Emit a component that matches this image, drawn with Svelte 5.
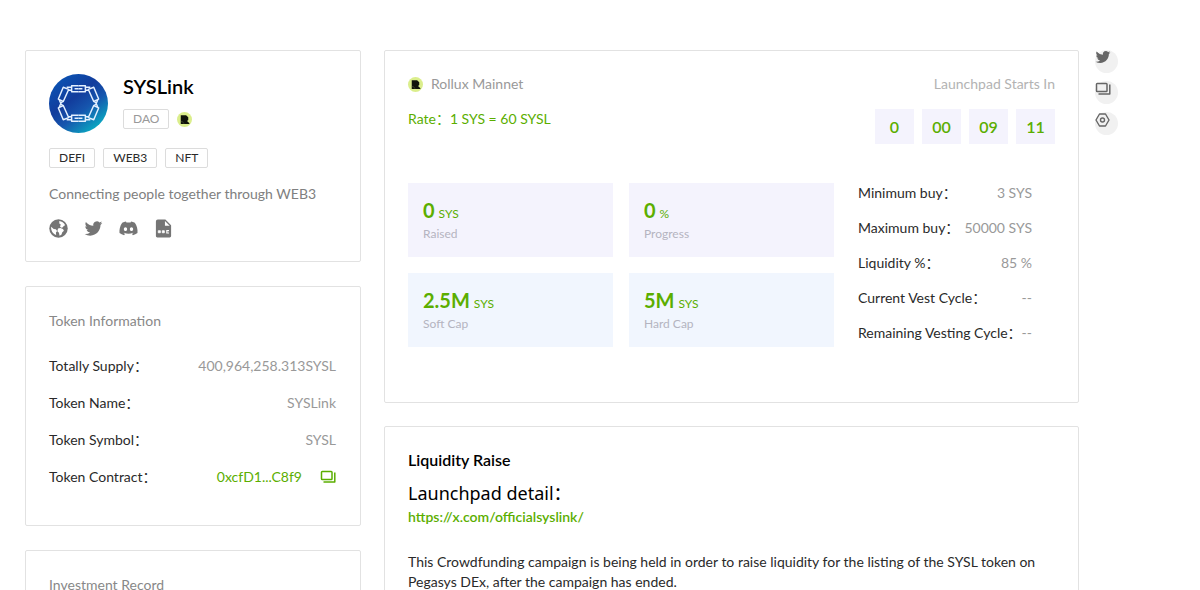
<script lang="ts">
  const tags = ['DEFI', 'WEB3', 'NFT'];

  const token = [
    { label: 'Totally Supply', value: '400,964,258.313SYSL' },
    { label: 'Token Name', value: 'SYSLink' },
    { label: 'Token Symbol', value: 'SYSL' },
  ];

  const countdown = ['0', '00', '09', '11'];

  const stats = [
    { value: '0', unit: 'SYS', label: 'Raised', tone: 'violet' },
    { value: '0', unit: '%', label: 'Progress', tone: 'violet' },
    { value: '2.5M', unit: 'SYS', label: 'Soft Cap', tone: 'blue' },
    { value: '5M', unit: 'SYS', label: 'Hard Cap', tone: 'blue' },
  ];

  const terms = [
    { label: 'Minimum buy', value: '3 SYS' },
    { label: 'Maximum buy', value: '50000 SYS' },
    { label: 'Liquidity %', value: '85 %' },
    { label: 'Current Vest Cycle', value: '--' },
    { label: 'Remaining Vesting Cycle', value: '--' },
  ];

  const twitter = 'M22.162 5.656a8.384 8.384 0 0 1-2.402.658A4.196 4.196 0 0 0 21.6 4c-.82.488-1.719.83-2.656 1.015a4.182 4.182 0 0 0-7.126 3.814 11.874 11.874 0 0 1-8.62-4.37 4.168 4.168 0 0 0-.566 2.103c0 1.45.738 2.731 1.86 3.481a4.168 4.168 0 0 1-1.894-.523v.052a4.185 4.185 0 0 0 3.355 4.101 4.21 4.21 0 0 1-1.89.072A4.185 4.185 0 0 0 7.97 16.65a8.394 8.394 0 0 1-6.191 1.732 11.83 11.83 0 0 0 6.41 1.88c7.693 0 11.9-6.373 11.9-11.9 0-.18-.005-.362-.013-.54a8.496 8.496 0 0 0 2.087-2.165z';
  const discord = 'M19.303 5.337A17.32 17.32 0 0 0 14.963 4c-.191.329-.403.775-.552 1.125a16.592 16.592 0 0 0-4.808 0C9.454 4.775 9.23 4.329 9.05 4a17.075 17.075 0 0 0-4.342 1.337C1.961 9.391 1.218 13.35 1.59 17.255a17.69 17.69 0 0 0 5.318 2.664 12.94 12.94 0 0 0 1.136-1.836c-.627-.234-1.22-.52-1.794-.86.149-.106.297-.223.435-.34 3.46 1.582 7.207 1.582 10.624 0 .149.117.287.234.435.34-.573.34-1.167.626-1.793.86a12.94 12.94 0 0 0 1.135 1.836 17.594 17.594 0 0 0 5.318-2.664c.457-4.52-.722-8.448-3.1-11.918ZM8.52 14.846c-1.04 0-1.889-.945-1.889-2.101 0-1.157.828-2.102 1.89-2.102 1.05 0 1.91.945 1.888 2.102 0 1.156-.838 2.1-1.889 2.1Zm6.974 0c-1.04 0-1.89-.945-1.89-2.101 0-1.157.828-2.102 1.89-2.102 1.05 0 1.91.945 1.889 2.102 0 1.156-.828 2.1-1.89 2.1Z';
</script>

{#snippet chainBadge()}
  <svg class="badge" viewBox="0 0 16 16" aria-hidden="true">
    <circle cx="8" cy="8" r="8" fill="#dbee8c"/>
    <path d="M4 3.500h5.700l2.300 2v3L10.700 9.700l2.500 2.300v.7H4z" fill="#10140a"/>
    <path d="M4 10.300h1.800l1.700 2.200" fill="none" stroke="#6c7448" stroke-width=".5"/>
  </svg>
{/snippet}

{#snippet copyIcon()}
  <svg viewBox="0 0 16 16" width="16" height="16" fill="none" stroke="currentColor" stroke-width="1.500" stroke-linejoin="round" aria-hidden="true">
    <rect x="1.500" y="2.500" width="10.500" height="8" rx=".8"/>
    <path d="M14.800 3.500v9.500H3.500"/>
  </svg>
{/snippet}

<div class="page">
  <main>
    <div class="side">
      <section class="card profile">
        <header>
          <svg class="logo" viewBox="0 0 60 60" aria-hidden="true">
            <defs>
              <linearGradient id="logo-fill" x1=".2" y1=".1" x2=".85" y2=".95">
                <stop offset="0" stop-color="#0b50b0"/>
                <stop offset=".35" stop-color="#123c9c"/>
                <stop offset=".6" stop-color="#1656ae"/>
                <stop offset="1" stop-color="#08b4c4"/>
              </linearGradient>
            </defs>
            <circle cx="30" cy="30" r="30" fill="url(#logo-fill)"/>
            <g fill="none" stroke="#e4f0ff" stroke-width="1.500" stroke-linejoin="round">
              {#each ['', 'matrix(-1 0 0 1 60 0)', 'matrix(1 0 0 -1 0 60)', 'rotate(180 30 30)'] as flip}
                <g transform={flip}>
                  <path d="M30 12h-7v6h7M26 15h4"/>
                  <path d="M14.500 13.500l5.500 2.200-5.500 12.300-5-2.500z"/>
                  <path d="M23 13.500h-5M23 16.500h-3.500M10.500 26.500l1.500 3.500M14 28l-2.500 2"/>
                </g>
              {/each}
            </g>
          </svg>
          <div class="identity">
            <h1>SYSLink</h1>
            <div class="kind">
              <span class="tag muted">DAO</span>
              {@render chainBadge()}
            </div>
          </div>
        </header>
        <div class="tags">
          {#each tags as tag}
            <span class="tag">{tag}</span>
          {/each}
        </div>
        <p>Connecting people together through WEB3</p>
        <nav class="socials">
          <a href="#website" aria-label="Website">
            <svg viewBox="0 0 20 20">
              <circle cx="10" cy="10" r="9.700" fill="currentColor"/>
              <path d="M10.800 2.200c2.600.3 5 1.900 6.200 4.400l-1.600.7-.7 1.500-2 .3-1.200-1.600 1-1.500-1.600-1.300z" fill="#fff"/>
              <path d="M2.300 8.200l2.600 2.200 2.300.5 1.300 1.600-1.200 1.700.2 2.700c-3.200-1.100-5.700-4.600-5.200-8.700z" fill="#fff"/>
              <path d="M9.500 10l2.500-.6 2.700 1.200 1 1.700-1.700 1.600-1 2.600-1.900 1.100-.6-3-1.700-1.800z" fill="#fff"/>
            </svg>
          </a>
          <a href="#twitter" aria-label="Twitter">
            <svg viewBox="1 1 22 22"><path d={twitter} fill="currentColor"/></svg>
          </a>
          <a href="#discord" aria-label="Discord">
            <svg viewBox="1 1 22 22"><path d={discord} fill="currentColor"/></svg>
          </a>
          <a href="#docs" aria-label="Documents">
            <svg viewBox="0 0 20 20">
              <path d="M4 .5h8L18 6.500v11.500a1.500 1.500 0 0 1-1.500 1.500h-13A1.500 1.500 0 0 1 2 18V2.500a2 2 0 0 1 2-2z" fill="currentColor"/>
              <path d="M11.500 2v5h5z" fill="#fff"/>
              <path d="M4.500 12.300h2.200v2.200H4.500zM8.700 12.300h2.200v2.200H8.700z" fill="#fff" stroke="#fff" stroke-width=".8"/>
              <path d="M15.800 12.300h-2.300v2.400h2.300" fill="none" stroke="#fff" stroke-width="1.200"/>
            </svg>
          </a>
        </nav>
      </section>

      <section class="card token">
        <h2>Token Information</h2>
        <dl>
          {#each token as row}
            <div><dt>{row.label}&#xFF1A;</dt><dd>{row.value}</dd></div>
          {/each}
          <div>
            <dt>Token Contract&#xFF1A;</dt>
            <dd class="contract">
              <a href="#contract">0xcfD1...C8f9</a>
              <button aria-label="Copy contract address">{@render copyIcon()}</button>
            </dd>
          </div>
        </dl>
      </section>

      <section class="card record">
        <h2>Investment Record</h2>
      </section>
    </div>

    <div class="content">
      <section class="card pool">
        <header>
          <div>
            <div class="chain">{@render chainBadge()}<span>Rollux Mainnet</span></div>
            <p class="rate">Rate&#xFF1A;1 SYS = 60 SYSL</p>
          </div>
          <div class="starts">
            <span>Launchpad Starts In</span>
            <div class="countdown">
              {#each countdown as part}
                <b>{part}</b>
              {/each}
            </div>
          </div>
        </header>
        <div class="figures">
          <div class="stats">
            {#each stats as stat}
              <div class="stat {stat.tone}">
                <div><strong>{stat.value}</strong><span>{stat.unit}</span></div>
                <small>{stat.label}</small>
              </div>
            {/each}
          </div>
          <dl class="terms">
            {#each terms as row}
              <div><dt>{row.label}&#xFF1A;</dt><dd>{row.value}</dd></div>
            {/each}
          </dl>
        </div>
      </section>

      <section class="card detail">
        <h2>Liquidity Raise</h2>
        <h3>Launchpad detail&#xFF1A;</h3>
        <a href="https://x.com/officialsyslink/">https://x.com/officialsyslink/</a>
        <p>
          This Crowdfunding campaign is being held in order to raise liquidity for the listing of the SYSL token on
          Pegasys DEx, after the campaign has ended.
        </p>
      </section>
    </div>
  </main>

  <aside>
    <button aria-label="Twitter">
      <svg viewBox="1 3 22 18" width="16" height="14"><path d={twitter} fill="currentColor"/></svg>
    </button>
    <button aria-label="Copy link">{@render copyIcon()}</button>
    <button aria-label="Settings">
      <svg viewBox="0 0 16 16" width="16" height="16" fill="none" stroke="currentColor" stroke-width="1.400" stroke-linejoin="round">
        <path d="M4.500 2h6l3.500 6-3.500 6h-6L1 8z"/>
        <circle cx="7.500" cy="8" r="2"/>
      </svg>
    </button>
  </aside>
</div>

<style>
  :global(body) {
    background: #fff;
  }
  .page {
    --green: #5bae00;
    --line: #e2e2e2;
    box-sizing: border-box;
    display: flex;
    gap: 16px;
    height: 100vh;
    padding: 50px 82px 0 25px;
    overflow-y: auto;
    scrollbar-width: none;
    color: #2a2a2a;
    font: 14px/20px Lato, "Noto Sans CJK SC", sans-serif;
  }
  h1, h2, h3, p, dl, dd {
    margin: 0;
  }
  a {
    color: inherit;
    text-decoration: none;
  }
  button {
    padding: 0;
    border: 0;
    background: none;
    color: inherit;
    cursor: pointer;
  }
  svg {
    display: block;
  }
  main {
    display: flex;
    flex: 1;
    gap: 23px;
    min-width: 0;
  }
  .side,
  .content {
    display: flex;
    flex-direction: column;
  }
  .side {
    flex: 0 0 336px;
    gap: 24px;
  }
  .content {
    flex: 1;
    gap: 23px;
    min-width: 0;
  }
  .card {
    flex: none;
    box-sizing: border-box;
    padding: 23px;
    border: 1px solid var(--line);
    border-radius: 2px;
  }
  .badge {
    width: 15px;
    height: 15px;
  }

  .profile header {
    display: flex;
    gap: 15px;
  }
  .logo {
    width: 59px;
    height: 59px;
  }
  h1 {
    color: #000;
    font-size: 20px;
    font-weight: 600;
    line-height: 24px;
  }
  .kind {
    display: flex;
    align-items: center;
    gap: 8px;
    margin-top: 11px;
  }
  .tag {
    padding: 0 9px;
    border: 1px solid #dcdcdc;
    border-radius: 2px;
    font-size: 12px;
    line-height: 18px;
  }
  .muted {
    color: #999;
  }
  .tags {
    display: flex;
    gap: 8px;
    margin-top: 15px;
  }
  .profile p {
    margin-top: 16px;
    color: #808080;
  }
  .socials {
    display: flex;
    gap: 16px;
    margin-top: 15px;
    color: #757575;
  }
  .socials svg {
    width: 19px;
    height: 19px;
  }

  .side h2 {
    color: #888;
    font-size: 14px;
    font-weight: 400;
    line-height: 20px;
  }
  dl div {
    display: flex;
    justify-content: space-between;
    white-space: nowrap;
  }
  dt,
  dd {
    height: 20px;
  }
  dd {
    color: #999;
  }
  .token {
    padding: 24px 24px 38px 23px;
  }
  .token dl {
    display: grid;
    gap: 17px;
    margin-top: 25px;
  }
  .contract {
    display: flex;
    align-items: center;
    gap: 18px;
    color: var(--green);
  }
  .record {
    min-height: 240px;
    padding-top: 24px;
  }

  .pool {
    padding-bottom: 55px;
  }
  .pool header {
    display: flex;
    justify-content: space-between;
  }
  .chain {
    display: flex;
    align-items: center;
    gap: 8px;
    color: #999;
  }
  .rate {
    margin-top: 15px;
    color: var(--green);
  }
  .starts {
    color: #b3b3b3;
    text-align: right;
  }
  .countdown {
    display: flex;
    gap: 8px;
    margin-top: 15px;
  }
  .countdown b {
    width: 39px;
    background: #f4f3fd;
    color: var(--green);
    font-size: 16px;
    font-weight: 600;
    line-height: 35px;
    text-align: center;
  }
  .figures {
    display: flex;
    gap: 24px;
    margin-top: 39px;
    padding-right: 24px;
  }
  .stats {
    display: grid;
    flex: 1;
    grid-template-columns: 1fr 1fr;
    gap: 16px;
  }
  .stat {
    box-sizing: border-box;
    height: 74px;
    padding: 15px;
    color: var(--green);
  }
  .stat div {
    display: flex;
    align-items: baseline;
    gap: 4px;
    line-height: 24px;
  }
  .stat strong {
    font-size: 20px;
    font-weight: 700;
  }
  .stat span {
    font-size: 12px;
    line-height: 12px;
  }
  small {
    display: block;
    color: #b4b4c0;
    font-size: 12px;
    line-height: 24px;
  }
  .violet {
    background: #f4f3fd;
  }
  .blue {
    background: #f1f6fe;
  }
  .terms {
    display: grid;
    flex: 0 0 173px;
    align-content: start;
    gap: 15px;
    min-width: 0;
  }

  .detail {
    padding-bottom: 48px;
  }
  .detail h2 {
    color: #000;
    font-size: 16px;
    font-weight: 600;
  }
  .detail h3 {
    height: 24px;
    margin-top: 11px;
    color: #000;
    font: 400 18px/24px "Noto Sans", "Noto Sans CJK SC", sans-serif;
  }
  .detail a {
    display: block;
    margin-top: 2px;
    color: var(--green);
    font-weight: 600;
  }
  .detail p {
    margin-top: 25px;
  }

  aside {
    display: flex;
    flex: 0 0 23px;
    flex-direction: column;
    gap: 8px;
    color: #666;
  }
  aside button {
    display: flex;
    align-items: flex-start;
    width: 23px;
    height: 23px;
    border-radius: 50%;
    background: #f1f1f1;
  }
</style>
